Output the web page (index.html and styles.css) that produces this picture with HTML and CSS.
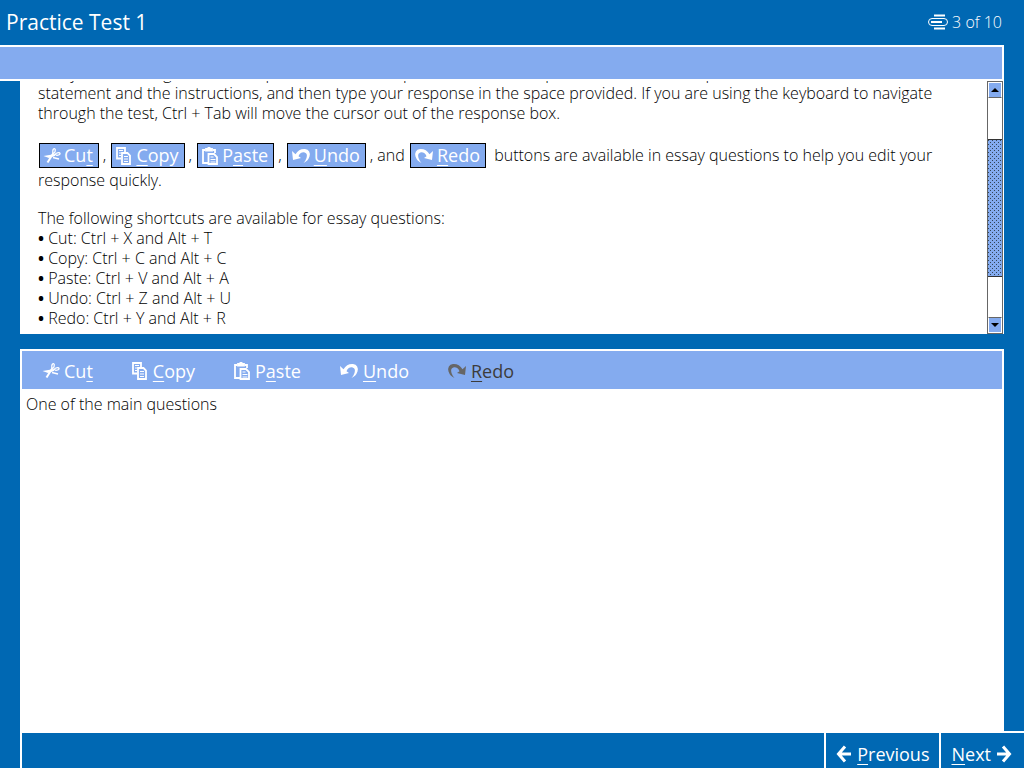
FILE: index.html
```html
<!DOCTYPE html>
<html lang="en">
<head>
<meta charset="utf-8">
<meta name="viewport" content="width=device-width, initial-scale=1">
<title>Practice Test 1</title>
<link rel="stylesheet" href="styles.css">
</head>
<body>
<svg class="sprite" aria-hidden="true">
  <symbol id="cut" viewBox="0 0 18 18"><g fill="none" stroke="currentColor"><path d="M4.500 15.500 10.500 6" stroke-width="2"/><ellipse cx="11" cy="3.800" rx="1.200" ry="2.300" stroke-width="1.300" transform="rotate(12 11 3.800)"/><ellipse cx="14.800" cy="7" rx="2.300" ry="1.200" stroke-width="1.300" transform="rotate(-10 14.800 7)"/><path d="M10 10.500 16 12" stroke-width="1.300"/></g><path d="M.5 9 12 7v2L6 11z" fill="currentColor"/></symbol>
  <symbol id="copy" viewBox="0 0 18 18"><g fill="none" stroke="currentColor" stroke-width="1.800"><path d="M6 11.500H2V1h8v4"/><path d="M4 3.500h4M4 6h2M4 8.500h2" stroke-width="1"/><path d="M7 6h5.500L15 8.500V17H7z"/><path d="M9 9.500h4M9 12h4M9 14.500h4" stroke-width="1"/></g></symbol>
  <symbol id="paste" viewBox="0 0 18 18"><g fill="none" stroke="currentColor" stroke-width="1.800"><path d="M7 16H2V3h2M12 3h2v3"/><path d="M5 3.500V2h1.500q1.500-2.500 3 0H11v1.500z" fill="currentColor"/><path d="M7.500 7H13l3 3v7H7.500z"/><path d="M9.500 10h3M9.500 12.500h5M9.500 15h5" stroke-width="1"/></g></symbol>
  <symbol id="undo" viewBox="0 0 20 18"><path d="M1 4 2 13 10 11 7.500 9.200Q9 5 13 5.200 17 6 15.500 11 14.500 14 12.500 16 17 14 18.500 9.500 20 3 14 2 8 1.500 4.500 7.200z" fill="currentColor"/></symbol>
  <symbol id="redo" viewBox="0 0 20 18"><path d="M19 4 18 13 10 11 12.500 9.200Q11 5 7 5.200 3 6 4.500 11 5.500 14 7.500 16 3 14 1.500 9.500 0 3 6 2 12 1.500 15.500 7.200z" fill="currentColor"/></symbol>
  <symbol id="left" viewBox="0 0 16 18"><path d="M9 1.500 2.500 9 9 16.500M3 9h12" fill="none" stroke="currentColor" stroke-width="3"/></symbol>
  <symbol id="right" viewBox="0 0 16 18"><path d="M7 1.500 13.500 9 7 16.500M13 9H1" fill="none" stroke="currentColor" stroke-width="3"/></symbol>
  <symbol id="pages" viewBox="0 0 20 16"><g fill="none" stroke="currentColor"><path d="M6 1.500h11M6 14.500h11M3 8h11" stroke-width="2"/><rect x=".5" y="4.500" width="19" height="7" rx="3.500"/></g></symbol>
</svg>

<header class="header">
  <h1 class="title">Practice Test 1</h1>
  <div class="progress"><svg class="pages"><use href="#pages"/></svg>3 of 10</div>
</header>
<div class="band"></div>

<main class="main">
  <section class="passage">
    <div class="text">
      <p class="first">Essay sections begin with the topic and then some part of the detail to put into it. Read the topic</p>
      <p>statement and the instructions, and then type your response in the space provided. If you are using the keyboard to navigate through the test, Ctrl + Tab will move the cursor out of the response box.</p>
      <p class="samples">
        <span class="chip"><svg class="icon"><use href="#cut"/></svg><span>Cu<u>t</u></span></span>,
        <span class="chip"><svg class="icon"><use href="#copy"/></svg><span><u>C</u>opy</span></span>,
        <span class="chip"><svg class="icon"><use href="#paste"/></svg><span>P<u>a</u>ste</span></span>,
        <span class="chip"><svg class="icon wide"><use href="#undo"/></svg><span><u>U</u>ndo</span></span>, and
        <span class="chip"><svg class="icon wide"><use href="#redo"/></svg><span><u>R</u>edo</span></span> buttons are available in essay questions to help you edit your response quickly.</p>
      <p class="lead">The following shortcuts are available for essay questions:</p>
      <ul class="list">
        <li>Cut: Ctrl + X and Alt + T</li>
        <li>Copy: Ctrl + C and Alt + C</li>
        <li>Paste: Ctrl + V and Alt + A</li>
        <li>Undo: Ctrl + Z and Alt + U</li>
        <li>Redo: Ctrl + Y and Alt + R</li>
      </ul>
    </div>
    <div class="scroll">
      <button class="step" aria-label="Scroll up"><svg class="tri" viewBox="0 0 8 4"><path d="M0 4 4 0 8 4z"/></svg></button>
      <div class="track"><div class="thumb"></div></div>
      <button class="step down" aria-label="Scroll down"><svg class="tri" viewBox="0 0 8 4"><path d="M0 0 4 4 8 0z"/></svg></button>
    </div>
  </section>

  <section class="editor">
    <div class="toolbar">
      <button class="tool"><svg class="icon"><use href="#cut"/></svg><span>Cu<u>t</u></span></button>
      <button class="tool"><svg class="icon"><use href="#copy"/></svg><span><u>C</u>opy</span></button>
      <button class="tool"><svg class="icon"><use href="#paste"/></svg><span>P<u>a</u>ste</span></button>
      <button class="tool"><svg class="icon wide"><use href="#undo"/></svg><span><u>U</u>ndo</span></button>
      <button class="tool" disabled><svg class="icon wide"><use href="#redo"/></svg><span><u>R</u>edo</span></button>
    </div>
    <textarea class="response" aria-label="Response" spellcheck="false">One of the main questions</textarea>
  </section>
</main>

<footer class="footer">
  <button class="nav"><svg class="arrow"><use href="#left"/></svg><span><u>P</u>revious</span></button>
  <button class="nav next"><span><u>N</u>ext</span><svg class="arrow"><use href="#right"/></svg></button>
</footer>
</body>
</html>
```
FILE: styles.css
```css
* { box-sizing: border-box; }

body {
  margin: 0;
  height: 100vh;
  display: flex;
  flex-direction: column;
  overflow: hidden;
  background: #0068b3;
  color: #000;
  font: 300 16px/20px "Open Sans", "Noto Sans", sans-serif;
}

p, ul, h1 { margin: 0; padding: 0; }
button { font: inherit; color: inherit; background: none; border: 0; padding: 0; }
u {
  text-decoration: underline 1px;
  text-underline-offset: 3px;
  text-decoration-skip-ink: none;
}
.sprite { position: absolute; width: 0; height: 0; }

.header {
  flex: none;
  height: 45px;
  padding: 0 22px 2px 6px;
  display: flex;
  justify-content: space-between;
  align-items: center;
  color: #fff;
}
.title { font-size: 21px; font-weight: 400; }
.progress { display: flex; align-items: center; gap: 4px; }
.pages { width: 20px; height: 16px; }

.band {
  flex: none;
  height: 36px;
  margin-right: 20px;
  background: #84abef;
  border: 2px solid #fff;
  border-left: 0;
}

.main {
  flex: 1;
  min-height: 0;
  margin: 0 20px;
  display: flex;
  flex-direction: column;
  gap: 15px;
}

.passage {
  flex: 2 1 0;
  min-height: 0;
  display: flex;
  background: #fff;
  padding-right: 1px;
}
.text { flex: 1; overflow: hidden; padding: 2px 40px 0 18px; }
.first { margin-top: -20px; white-space: nowrap; }
.samples { margin-top: 20px; line-height: 25px; }
.lead { margin-top: 15px; }
.list { list-style: none; }
.list li::before { content: "• "; font-weight: 700; }

.chip {
  display: inline-flex;
  align-items: center;
  vertical-align: top;
  gap: 3px;
  height: 25px;
  margin: 0 4px 0 1px;
  padding: 0 5px 0 3px;
  border: 1px solid #000;
  background: #84abef;
  color: #fff;
  font-size: 18px;
  font-weight: 400;
  line-height: 23px;
}
.icon { width: 18px; height: 18px; flex: none; }
.wide { width: 20px; }

.scroll {
  width: 16px;
  display: flex;
  flex-direction: column;
  border: 1px solid #666;
}
.step {
  height: 16px;
  display: grid;
  place-items: center;
  background: #84abef;
  border: 1px solid #fff;
  border-bottom-color: #666;
}
.tri { width: 8px; height: 4px; }
.track {
  flex: 1;
  display: grid;
  grid-template-rows: 41fr 139fr 41fr;
}
.thumb {
  grid-row: 2;
  border: solid #333;
  border-width: 1px 0;
  background:
    conic-gradient(from 0deg at 1px 1px, transparent 75%, #345 0) 0 0 / 4px 4px,
    conic-gradient(from 0deg at 1px 1px, transparent 75%, #345 0) 2px 2px / 4px 4px,
    #84abef;
}
.down { border-top-color: #666; border-bottom-color: #fff; }

.editor {
  flex: 3 1 0;
  min-height: 0;
  display: flex;
  flex-direction: column;
  border: 2px solid #fff;
  border-bottom: 0;
}
.toolbar {
  height: 38px;
  flex: none;
  display: flex;
  align-items: center;
  gap: 38px;
  padding: 1px 20px 0;
  background: #84abef;
  color: #fff;
  font-size: 18px;
  font-weight: 400;
}
.tool { display: flex; align-items: center; gap: 4px; }
.tool:disabled { color: #3c3c3c; }
.tool:disabled .icon { color: #666; }
.response {
  flex: 1;
  width: 100%;
  border: 0;
  outline: 0;
  resize: none;
  padding: 5px 4px;
  background: #fff;
  font: inherit;
  color: #000;
}

.footer {
  flex: none;
  height: 37px;
  margin-left: 20px;
  display: flex;
  justify-content: flex-end;
  border: solid #fff;
  border-width: 2px 0 0 2px;
  color: #fff;
  font-size: 18px;
  font-weight: 400;
}
.nav {
  display: flex;
  align-items: center;
  gap: 5px;
  padding: 6px 10px 0;
  border-left: 2px solid #fff;
}
.next { padding-right: 12px; }
.arrow { width: 16px; height: 18px; }
```
